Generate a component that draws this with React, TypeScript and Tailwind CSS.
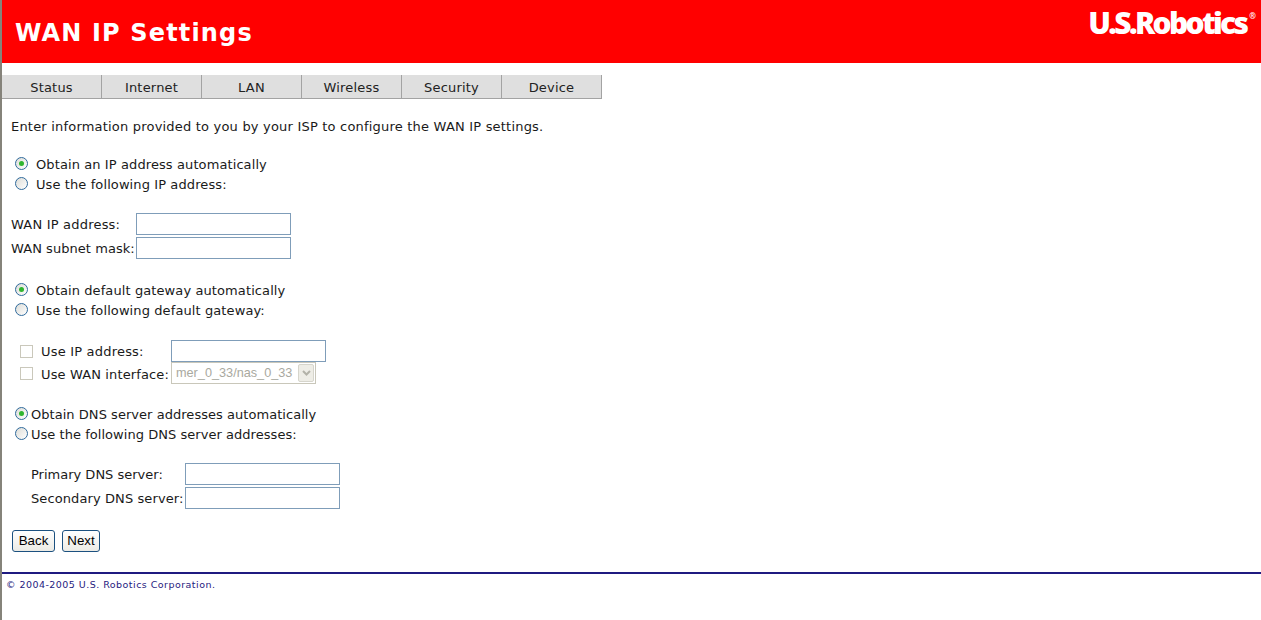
const font = "font-['DejaVu_Sans',sans-serif]";

function Radio({ on }: { on?: boolean }) {
  return (
    <span className="-mt-[2px] flex h-[13px] w-[13px] shrink-0 items-center justify-center rounded-full border border-[#2f6a9c] bg-gradient-to-br from-[#dcdcd7] to-white">
      {on && <span className="h-[5px] w-[5px] rounded-full bg-[#2fb52f]" />}
    </span>
  );
}

function RadioRow({ on, label, tight }: { on?: boolean; label: string; tight?: boolean }) {
  return (
    <div className={`flex h-5 items-center whitespace-nowrap pl-[13px] ${tight ? "gap-[3px] tracking-[0.04px]" : "gap-[8px] tracking-[0.1px]"}`}>
      <Radio on={on} />
      <span className="pt-[1px]">{label}</span>
    </div>
  );
}

function TextBox({ className = "" }: { className?: string }) {
  return <div className={`h-[22px] w-[155px] shrink-0 border border-[#7f9db9] bg-white ${className}`} />;
}

function Check() {
  return <span className="h-[13px] w-[13px] shrink-0 border border-[#cac8bb] bg-white" />;
}

function Btn({ label, w }: { label: string; w: string }) {
  return (
    <div className={`flex h-[22px] ${w} items-center justify-center rounded-[3px] border border-[#1c5180] bg-gradient-to-b from-white to-[#ecebe5] pb-[1px] font-['Liberation_Sans',sans-serif] text-[13.3px] tracking-normal text-black`}>
      {label}
    </div>
  );
}

export default function App() {
  const tabs = ["Status", "Internet", "LAN", "Wireless", "Security", "Device"];
  return (
    <div className={`${font} h-[620px] w-[1261px] overflow-hidden border-l-2 border-[#85837a] bg-white text-[13px] leading-5 tracking-[0.2px] text-[#1a1a1a]`}>
      <header className="flex h-[63px] items-start justify-between bg-[#ff0000]">
        <h1 className="mt-[17px] pl-[13px] text-[24px] font-bold leading-[32px] text-white tracking-[1.15px]">WAN IP Settings</h1>
        <div className="mr-[5px] mt-[3px] flex items-start font-['Open_Sans',sans-serif] text-[30px] font-extrabold leading-[40px] tracking-[-2.7px] text-white">
          U.S.Robotics<span className="ml-[3px] mt-[9px] text-[8px] font-bold leading-[8px] tracking-normal">®</span>
        </div>
      </header>

      <nav className="mt-3 flex h-6 w-[600px] border-b border-[#a3a3a3] bg-[#dfdfdf]">
        {tabs.map((t) => (
          <div key={t} className="flex h-[23px] w-[100px] items-center justify-center border-r border-[#a3a3a3] pt-[2px] text-[#222]">
            {t}
          </div>
        ))}
      </nav>

      <p className="mt-[18px] h-5 pl-[9px]">Enter information provided to you by your ISP to configure the WAN IP settings.</p>

      <div className="mt-[17px]">
        <RadioRow on label="Obtain an IP address automatically" />
        <RadioRow label="Use the following IP address:" />
      </div>

      <div className="mt-[19px] flex flex-col gap-[2px] whitespace-nowrap pl-[9px]">
        <div className="flex items-center"><span className="w-[125px] pt-[1px]">WAN IP address:</span><TextBox /></div>
        <div className="flex items-center"><span className="w-[125px] pt-[1px] tracking-[0.05px]">WAN subnet mask:</span><TextBox /></div>
      </div>

      <div className="mt-[21px]">
        <RadioRow on label="Obtain default gateway automatically" />
        <RadioRow label="Use the following default gateway:" />
      </div>

      <div className="mt-[20px] flex flex-col whitespace-nowrap pl-[18px]">
        <div className="flex items-center">
          <Check />
          <span className="ml-[8px] w-[130px] pt-[1px]">Use IP address:</span>
          <TextBox />
        </div>
        <div className="flex items-center">
          <Check />
          <span className="ml-[8px] w-[130px] pt-[3px] leading-[18px] tracking-[0.13px]">Use WAN interface:</span>
          <div className="flex h-[22px] w-[145px] items-center border border-[#c9c7ba] bg-white pl-[4px] pr-[1px] font-['Liberation_Sans',sans-serif] text-[12.7px] tracking-normal text-[#a9a9a0]">
            <span className="flex-1">mer_0_33/nas_0_33</span>
            <span className="flex h-[18px] w-4 items-center justify-center rounded-[2px] border border-[#d6d5cc] bg-[#eeede6]">
              <svg width="9" height="6" viewBox="0 0 9 6"><path d="M1 1l3.5 3.5L8 1" fill="none" stroke="#b3b2a8" strokeWidth="2" /></svg>
            </span>
          </div>
        </div>
      </div>

      <div className="mt-[20px]">
        <RadioRow tight on label="Obtain DNS server addresses automatically" />
        <RadioRow tight label="Use the following DNS server addresses:" />
      </div>

      <div className="mt-[19px] flex flex-col gap-[2px] whitespace-nowrap pl-[29px]">
        <div className="flex items-center"><span className="w-[154px] pt-[1px] tracking-[0px]">Primary DNS server:</span><TextBox /></div>
        <div className="flex items-center"><span className="w-[154px] pt-[1px] tracking-[0.1px]">Secondary DNS server:</span><TextBox /></div>
      </div>

      <div className="mt-[21px] flex gap-[7px] pl-[10px]">
        <Btn label="Back" w="w-[43px]" />
        <Btn label="Next" w="w-[38px]" />
      </div>

      <footer className="mt-[20px] border-t-2 border-[#1f1a80] pl-[4px] pt-[4px] text-[9.5px] leading-[14px] tracking-[0.46px] text-[#1f1a80]">
        © 2004-2005 U.S. Robotics Corporation.
      </footer>
    </div>
  );
}
